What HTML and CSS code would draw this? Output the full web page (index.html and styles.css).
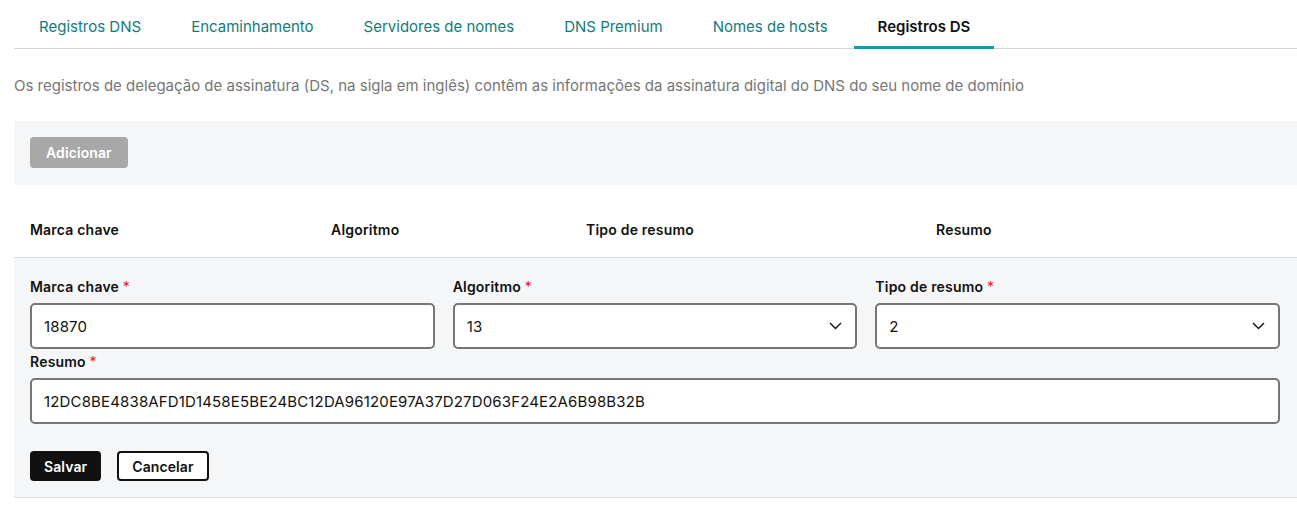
FILE: index.html
```html
<!DOCTYPE html>
<html lang="pt">
<head>
<meta charset="utf-8">
<link rel="stylesheet" href="styles.css">
</head>
<body>
<div class="page">
  <nav class="tabs">
    <a class="tab">Registros DNS</a>
    <a class="tab">Encaminhamento</a>
    <a class="tab">Servidores de nomes</a>
    <a class="tab">DNS Premium</a>
    <a class="tab">Nomes de hosts</a>
    <a class="tab active">Registros DS</a>
  </nav>
  <p class="desc">Os registros de delegação de assinatura (DS, na sigla em inglês) contêm as informações da assinatura digital do DNS do seu nome de domínio</p>
  <div class="toolbar">
    <button class="btn btn-disabled">Adicionar</button>
  </div>
  <div class="table-head">
    <span>Marca chave</span>
    <span>Algoritmo</span>
    <span>Tipo de resumo</span>
    <span>Resumo</span>
  </div>
  <form class="edit">
    <div class="row3">
      <div class="field">
        <label class="label">Marca chave <span class="req">*</span></label>
        <div class="input">18870</div>
      </div>
      <div class="field">
        <label class="label">Algoritmo <span class="req">*</span></label>
        <div class="input select">13<svg class="chev" width="13" height="8" viewBox="0 0 13 8"><path d="M1 1l5.5 5.5L12 1" fill="none" stroke="#111" stroke-width="1.4"/></svg></div>
      </div>
      <div class="field">
        <label class="label">Tipo de resumo <span class="req">*</span></label>
        <div class="input select">2<svg class="chev" width="13" height="8" viewBox="0 0 13 8"><path d="M1 1l5.5 5.5L12 1" fill="none" stroke="#111" stroke-width="1.4"/></svg></div>
      </div>
    </div>
    <div class="field">
      <label class="label label-tight">Resumo <span class="req">*</span></label>
      <div class="input">12DC8BE4838AFD1D1458E5BE24BC12DA96120E97A37D27D063F24E2A6B98B32B</div>
    </div>
    <div class="actions">
      <button type="button" class="btn btn-primary">Salvar</button>
      <button type="button" class="btn btn-outline">Cancelar</button>
    </div>
  </form>
</div>
</body>
</html>
```

FILE: styles.css
```css
* { box-sizing: border-box; }
body {
  margin: 0;
  font-family: Inter, "Noto Sans", "Liberation Sans", sans-serif;
  color: #111;
  background: #fff;
}
.page {
  padding-left: 14px;
}
.tabs {
  display: flex;
  gap: 2px;
  height: 49px;
  border-bottom: 1px solid #d6d6d6;
  padding-left: 1px;
}
.tab {
  height: 49px;
  padding: 17px 24px 0;
  font-size: 15px;
  line-height: 20px;
  color: #137b7b;
  border-bottom: 3px solid transparent;
  margin-bottom: -1px;
}
.tab.active {
  color: #111;
  font-weight: 600;
  border-bottom-color: #00a4a6;
}
.desc {
  margin: 27px 0 25px;
  font-size: 15px;
  line-height: 20px;
  color: #767676;
}
.toolbar {
  background: #f4f6f7;
  padding: 16px 16px 17px;
}
.btn {
  font-family: inherit;
  font-size: 14px;
  font-weight: 600;
  border-radius: 4px;
  height: 31px;
  padding: 0 14px;
  border: 2px solid transparent;
  letter-spacing: 0.1px;
}
.btn-disabled {
  background: #a8a8a8;
  color: #fff;
}
.table-head {
  display: grid;
  grid-template-columns: 301px 255px 350px 1fr;
  padding: 36px 16px 18px;
  font-size: 14px;
  font-weight: 600;
  line-height: 18px;
  letter-spacing: 0.2px;
  border-bottom: 1px solid #d4dbe0;
}
.edit {
  background: #f4f6f7;
  padding: 20px 17px 16px 16px;
  border-bottom: 1px solid #d9dde0;
  margin: 0;
}
.row3 {
  display: grid;
  grid-template-columns: 1fr 1fr 1fr;
  gap: 18px;
}
.label {
  display: block;
  font-size: 14px;
  font-weight: 600;
  line-height: 18px;
  letter-spacing: 0.2px;
  margin-bottom: 7px;
}
.label-tight {
  margin-top: 4px;
}
.req { color: #e0201c; font-weight: 400; }
.input {
  height: 46px;
  border: 2px solid #767676;
  border-radius: 5px;
  background: #fff;
  padding: 0 12px;
  font-size: 15px;
  letter-spacing: 0.15px;
  display: flex;
  align-items: center;
}
.select {
  justify-content: space-between;
}
.chev { margin-right: 1px; }
.actions {
  display: flex;
  gap: 16px;
  margin-top: 27px;
}
.btn-primary {
  background: #111;
  color: #fff;
  height: 30px;
  padding: 0 12px;
}
.btn-outline {
  background: #fff;
  color: #111;
  border-color: #111;
  height: 30px;
  padding: 0 13px;
}
```
